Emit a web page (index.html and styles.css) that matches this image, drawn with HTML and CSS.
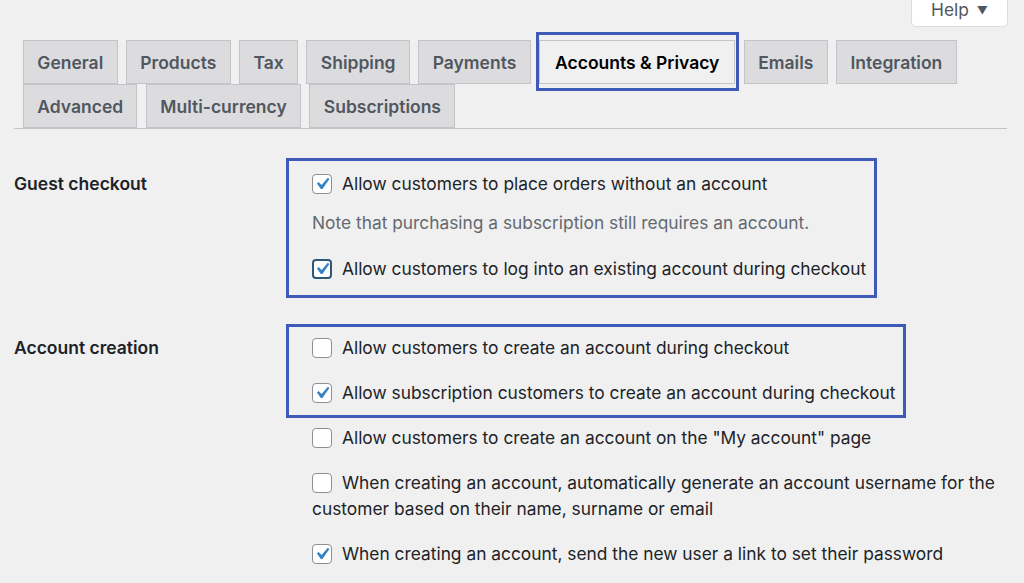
FILE: index.html
```html
<!DOCTYPE html>
<html>
<head>
    <meta charset="UTF-8" />
    <title>Accounts &amp; Privacy settings</title>
    <link rel="stylesheet" href="styles.css">
</head>
<body>
    <!-- help tab -->
    <div class="screen-meta">
        <button class="help-btn">Help <span class="caret">&#9660;</span></button>
    </div>

    <div class="wrap">

    <!-- settings tabs -->
    <nav class="nav-tabs">
        <a class="tab">General</a>
        <a class="tab">Products</a>
        <a class="tab">Tax</a>
        <a class="tab">Shipping</a>
        <a class="tab">Payments</a>
        <a class="tab tab-active">Accounts &amp; Privacy</a>
        <a class="tab">Emails</a>
        <a class="tab">Integration</a>
        <a class="tab">Advanced</a>
        <a class="tab">Multi-currency</a>
        <a class="tab">Subscriptions</a>
    </nav>

    <!-- guest checkout -->
    <section class="form-row row-guest">
        <h3 class="row-label">Guest checkout</h3>
        <div class="row-field">
            <div class="highlight box-guest">
                <label class="opt"><span class="check is-checked"></span>Allow customers to place orders without an account</label>
                <p class="note">Note that purchasing a subscription still requires an account.</p>
                <label class="opt opt-last"><span class="check is-checked is-focused"></span>Allow customers to log into an existing account during checkout</label>
            </div>
        </div>
    </section>

    <!-- account creation -->
    <section class="form-row row-account">
        <h3 class="row-label">Account creation</h3>
        <div class="row-field">
            <div class="highlight box-account">
                <label class="opt"><span class="check"></span>Allow customers to create an account during checkout</label>
                <label class="opt"><span class="check is-checked"></span>Allow subscription customers to create an account during checkout</label>
            </div>
            <label class="opt opt-first"><span class="check"></span>Allow customers to create an account on the "My account" page</label>
            <label class="opt"><span class="check"></span>When creating an account, automatically generate an account username for the customer based on their name, surname or email</label>
            <label class="opt"><span class="check is-checked"></span>When creating an account, send the new user a link to set their password</label>
        </div>
    </section>

    </div>
</body>
</html>
```

FILE: styles.css
```css
body {
 margin: 0;
 background-color: #f0f0f1;
 color: #1d2327;
 font-family: Inter, "Noto Sans", sans-serif;
 font-size: 17.35px;
 }

 .screen-meta {
 display: flex;
 justify-content: flex-end;
 height: 27px;
 padding-right: 16px;
 overflow: hidden;
 }

 .help-btn {
 display: flex;
 justify-content: center;
 align-items: flex-start;
 box-sizing: border-box;
 width: 97px;
 height: 38px;
 margin-top: -11px;
 padding: 11px 0 0;
 background-color: #fff;
 border: 1px solid #dcdcde;
 border-radius: 0 0 5px 5px;
 color: #50575e;
 font-family: inherit;
 font-size: 17.35px;
 line-height: 18px;
 }

 .caret {
 font-size: 11px;
 margin-left: 8px;
 }

 .wrap {
 padding: 0 17px 0 14px;
 }

 /* tabs */
 .nav-tabs {
 display: flex;
 flex-wrap: wrap;
 column-gap: 8.5px;
 margin-top: 13px;
 padding-left: 9px;
 border-bottom: 1px solid #c3c4c7;
 }

 .tab {
 position: relative;
 display: flex;
 align-items: center;
 box-sizing: border-box;
 height: 44px;
 padding: 0 13.3px;
 background-color: #dcdcde;
 border: 1px solid #c3c4c7;
 color: #50575e;
 font-weight: 600;
 font-size: 17.5px;
 }

 .tab-active {
 background-color: #f0f0f1;
 color: #000;
 padding: 0 15px;
 }

 /* blue highlight frame drawn over the screenshot */
 .tab-active::after {
 content: "";
 position: absolute;
 top: -9px;
 bottom: -8px;
 left: -4px;
 right: -5px;
 border: 3px solid #3d5ab8;
 }

 /* form rows */
 .form-row {
 display: grid;
 grid-template-columns: 298px 1fr;
 }

 .row-guest {
 margin-top: 29px;
 }

 .row-account {
 margin-top: 26px;
 }

 .row-label {
 margin: 0;
 font-size: 17.5px;
 font-weight: 600;
 line-height: 26px;
 }

 .row-guest .row-label {
 padding-top: 13px;
 }

 .row-account .row-label {
 padding-top: 11px;
 }

 .row-field {
 display: flex;
 flex-direction: column;
 align-items: flex-start;
 }

 .highlight {
 margin-left: -26px;
 padding-left: 23px;
 padding-right: 8px;
 border: 3px solid #3d5ab8;
 display: flex;
 flex-direction: column;
 }

 .box-guest {
 padding-top: 10px;
 padding-bottom: 13px;
 }

 .box-account {
 padding-top: 8px;
 padding-bottom: 9px;
 gap: 19px;
 }

 .opt {
 display: block;
 line-height: 26px;
 color: #1d2327;
 }

 .row-field > .opt {
 margin-top: 19px;
 }

 .row-field > .opt-first {
 margin-top: 7px;
 }

 .note {
 margin: 13px 0 20px;
 line-height: 26px;
 color: #646970;
 }

 .check {
 display: inline-block;
 box-sizing: border-box;
 width: 20px;
 height: 20px;
 margin-right: 10px;
 vertical-align: -4px;
 background-color: #fff;
 border: 1px solid #8c8f94;
 border-radius: 4px;
 }

 .is-checked {
 background-image: url("data:image/svg+xml;utf8,<svg xmlns='http://www.w3.org/2000/svg' viewBox='0 0 20 20'><path d='M14.83 4.89l1.34.94-5.81 8.38H9.02L5.78 9.67l1.34-1.25 2.57 2.4z' fill='%233582c4'/></svg>");
 background-size: 24px 24px;
 background-position: center;
 }

 .is-focused {
 border: 2px solid #2f5878;
 }
```
